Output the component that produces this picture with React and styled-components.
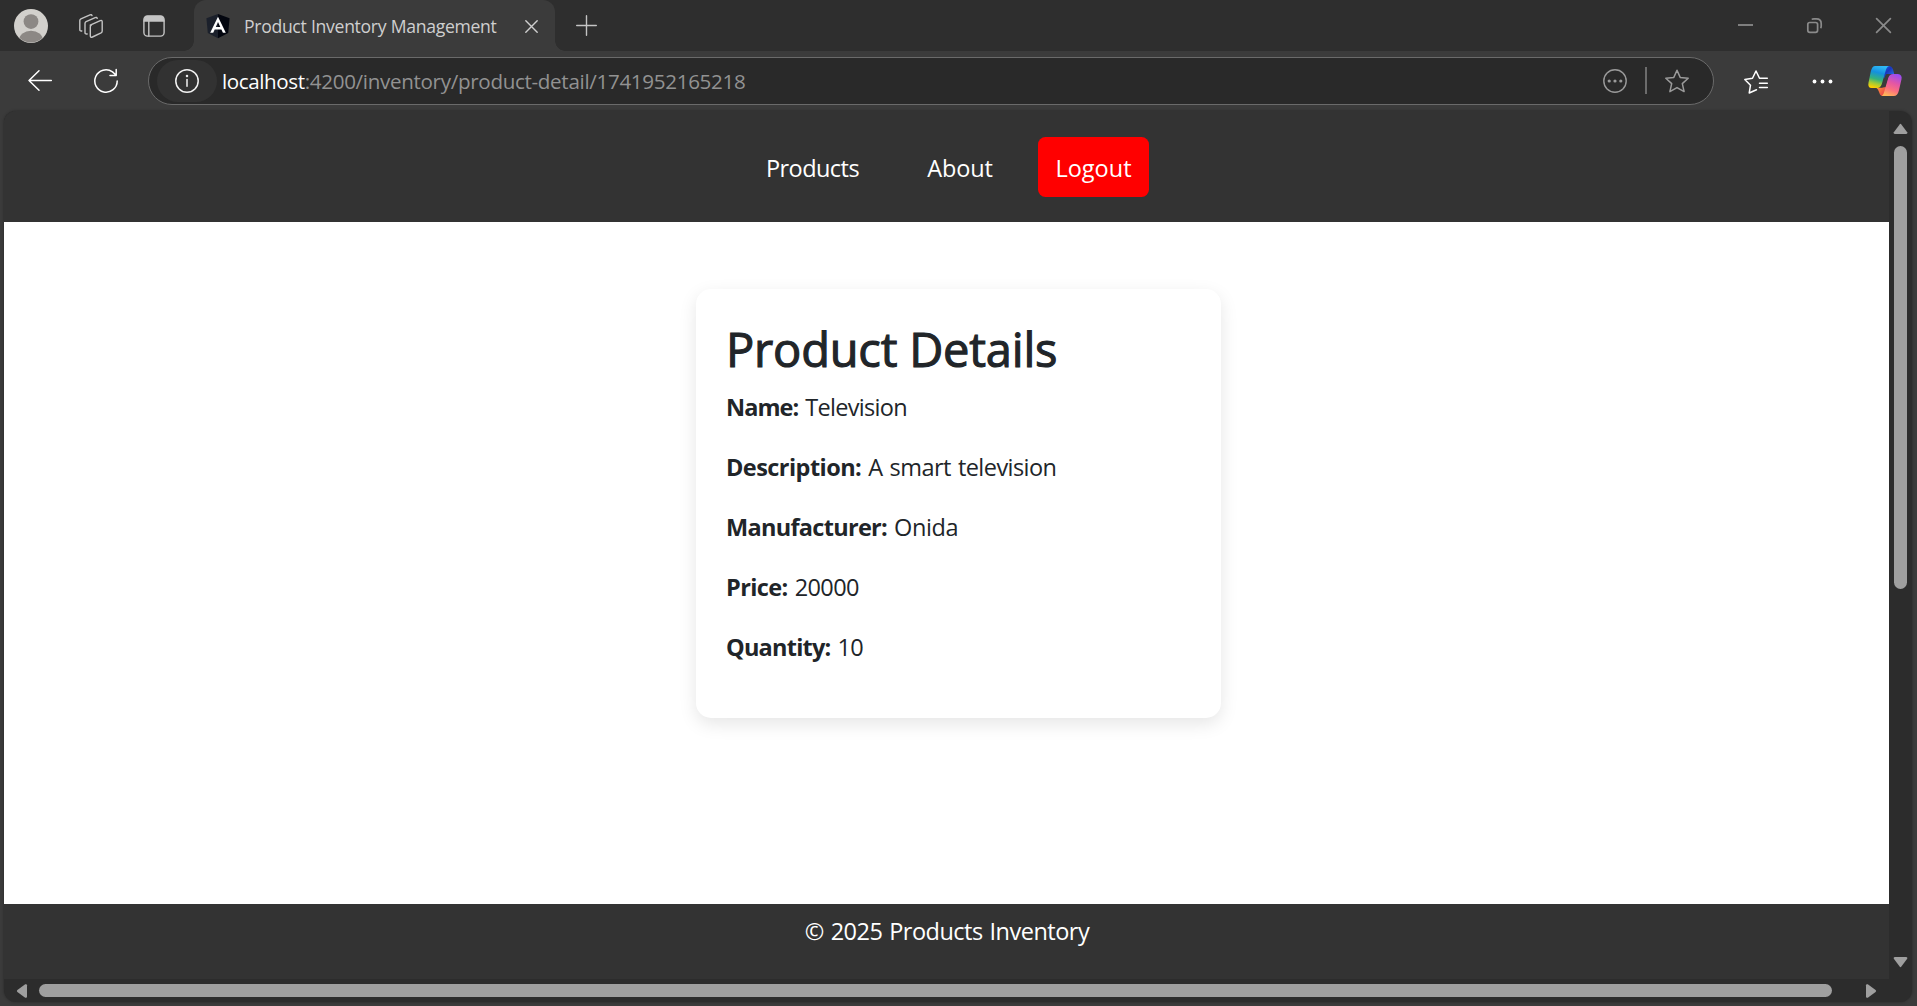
import React from "react";
import styled, { createGlobalStyle } from "styled-components";

const GlobalStyle = createGlobalStyle`
  *, *::before, *::after { box-sizing: border-box; }
  html, body { margin: 0; height: 100%; overflow: hidden; }
  #root { height: 100%; }
  body { font-family: "Open Sans", "Noto Sans", sans-serif; background: #3b3b3b; }
`;

const Window = styled.div`
  display: flex;
  flex-direction: column;
  width: 1917px;
  height: 1006px;
  background: #3b3b3b;
`;

/* ---------- Title bar ---------- */
const TabStrip = styled.header`
  display: flex;
  align-items: center;
  height: 51px;
  padding-left: 14px;
  background: #2e2e2e;
`;

const Glyph = styled.svg`
  display: block;
  flex: none;
  width: ${(p) => p.$w}px;
  height: ${(p) => p.$h || p.$w}px;
  margin-left: ${(p) => p.$ml || 0}px;
  margin-top: ${(p) => p.$mt || 0}px;
  overflow: visible;
`;

const Tab = styled.div`
  position: relative;
  display: flex;
  align-items: center;
  width: 361px;
  height: 51px;
  margin-left: 29px;
  padding-left: 12px;
  border-radius: 12px 12px 0 0;
  background: #3b3b3b;

  &::before,
  &::after {
    content: "";
    position: absolute;
    bottom: 0;
    width: 10px;
    height: 10px;
  }
  &::before {
    left: -10px;
    background: radial-gradient(circle at 0 0, #2e2e2e 9.5px, #3b3b3b 10px);
  }
  &::after {
    right: -10px;
    background: radial-gradient(circle at 100% 0, #2e2e2e 9.5px, #3b3b3b 10px);
  }
`;

const TabTitle = styled.span`
  width: 280px;
  margin-left: 14px;
  font-size: 17.6px;
  line-height: 24px;
  letter-spacing: -0.31px;
  word-spacing: 0.3px;
  white-space: nowrap;
  color: #cfcfcf;
`;

const WindowControls = styled.div`
  display: flex;
  align-items: center;
  gap: 54px;
  margin-left: auto;
  padding-right: 26px;
`;

/* ---------- Toolbar ---------- */
const Toolbar = styled.div`
  display: flex;
  align-items: center;
  height: 60px;
  padding: 0 0 1px 28px;
  background: #3b3b3b;
`;

const AddressBar = styled.div`
  display: flex;
  align-items: center;
  width: 1566px;
  height: 48px;
  margin-left: 30px;
  padding: 0 24px 0 8px;
  border: 1.5px solid #6a6a6a;
  border-radius: 24px;
  background: #292929;
`;

const SiteInfo = styled.div`
  display: flex;
  align-items: center;
  width: 60px;
  height: 42px;
  padding-left: 18px;
  border-radius: 21px;
  background: #323232;
`;

const Url = styled.span`
  flex: 1;
  margin-left: 5px;
  font-size: 20.6px;
  line-height: 30px;
  letter-spacing: -0.32px;
  white-space: nowrap;
  color: #929292;
`;

const Host = styled.span`
  letter-spacing: -0.4px;
  color: #fff;
`;

const BarDivider = styled.span`
  width: 2px;
  height: 27px;
  margin: 0 18px;
  background: #6c6c6c;
`;

/* ---------- Page viewport ---------- */
const Viewport = styled.div`
  display: grid;
  grid-template-columns: 1885px 23px;
  grid-template-rows: 868px 23px;
  width: 1908px;
  height: 891px;
  margin-left: 4px;
  border-radius: 12px;
  overflow: hidden;
  background: #2c2c2c;
  box-shadow: 0 0 3px rgba(0, 0, 0, 0.35);
`;

const Page = styled.div`
  display: flex;
  flex-direction: column;
  overflow: hidden;
  background: #333;
`;

const Nav = styled.nav`
  display: flex;
  justify-content: center;
  height: 111px;
  padding: 26px 0 0 4px;
  background: #333;
`;

const NavLink = styled.a`
  width: ${(p) => p.$width}px;
  height: 60px;
  margin-left: ${(p) => p.$gap || 0}px;
  padding: 13px 0 11px;
  border-radius: 7.5px;
  background: ${(p) => (p.$danger ? "#ff0000" : "transparent")};
  color: #fff;
  font-size: 23.5px;
  line-height: 36px;
  letter-spacing: ${(p) => p.$track}px;
  text-align: center;
  white-space: nowrap;
`;

const Main = styled.main`
  flex: 1;
  width: 1909px;
  padding-top: 67px;
  background: #fff;
`;

const Card = styled.section`
  width: 525px;
  height: 429px;
  margin: 0 auto;
  padding: 31px 29px 29px 30px;
  border-radius: 15px;
  background: #fff;
  box-shadow: 0 6px 18px rgba(0, 0, 0, 0.1);
  color: #212529;
`;

const CardTitle = styled.h1`
  margin: 0 0 11px;
  font-size: 47px;
  font-weight: 400;
  line-height: 58px;
  letter-spacing: -0.2px;
  -webkit-text-stroke: 1.1px #212529;
  white-space: nowrap;
`;

const Detail = styled.p`
  display: flex;
  gap: 7px;
  margin: 0 0 24px;
  font-size: 23.5px;
  line-height: 36px;
  white-space: nowrap;
`;

const Label = styled.strong`
  font-weight: 700;
  letter-spacing: ${(p) => p.$track}px;
`;

const Value = styled.span`
  letter-spacing: ${(p) => p.$track}px;
  word-spacing: 1.5px;
`;

const Footer = styled.footer`
  height: 75px;
  padding: 9px 0 0 1px;
  background: #333;
  color: #fff;
  font-size: 23.5px;
  line-height: 36px;
  letter-spacing: -0.5px;
  word-spacing: 1.2px;
  text-align: center;
`;

/* ---------- Scrollbars ---------- */
const VerticalBar = styled.div`
  display: flex;
  flex-direction: column;
  align-items: center;
  padding: 12px 0 11px 0;
`;

const HorizontalBar = styled.div`
  display: flex;
  align-items: center;
  padding: 0 12px 0 12px;
`;

const VerticalThumb = styled.div`
  width: 13px;
  height: 443px;
  margin: 12px 0 auto;
  border-radius: 7px;
  background: #9f9f9f;
`;

const HorizontalThumb = styled.div`
  width: 1793px;
  height: 13px;
  margin: 0 auto 0 12px;
  border-radius: 7px;
  background: #9f9f9f;
`;

const stroke = (color, width) => ({
  fill: "none",
  stroke: color,
  strokeWidth: width,
  strokeLinecap: "round",
  strokeLinejoin: "round",
});

const Avatar = () => (
  <Glyph $w={34} $mt={1} viewBox="0 0 34 34">
    <defs>
      <clipPath id="avatarClip"><circle cx="17" cy="17" r="16.5" /></clipPath>
    </defs>
    <circle cx="17" cy="17" r="17" fill="#d2d0cc" />
    <g clipPath="url(#avatarClip)" fill="#8c8885">
      <circle cx="17" cy="12.6" r="7.4" />
      <ellipse cx="17" cy="31.5" rx="12" ry="9.8" />
    </g>
  </Glyph>
);

const Workspaces = () => (
  <Glyph $w={24} $ml={31} $mt={1} viewBox="0 0 24 24" {...stroke("#c4c4c4", 1.4)}>
    <path d="M11.2 11.2 L21.3 6.6 Q23.2 5.9 23.2 7.8 V17 Q23.2 18.2 22.1 18.8 L13.4 23 Q11.3 23.9 11.3 21.8 V12.8 Q11.3 11.5 12.4 11" />
    <path d="M8.2 20 Q6 20.4 6 18.4 V9.4 Q6 8.2 7.1 7.7 L16.2 3.6 Q17.8 3 18.2 4.4" />
    <path d="M2.8 17 Q.8 17.4 .8 15.4 V6.6 Q.8 5.4 1.9 4.9 L11 .9 Q12.6 .3 13 1.6" />
  </Glyph>
);

const TabActions = () => (
  <Glyph $w={22} $ml={40} $mt={1} viewBox="0 0 22 22">
    <path d="M1 6 V4.5 Q1 .8 4.7 .8 H17.3 Q21 .8 21 4.5 V6 Z" fill="#c4c4c4" />
    <g {...stroke("#c4c4c4", 1.4)}>
      <rect x=".9" y=".9" width="20.2" height="20.2" rx="3.6" />
      <path d="M1 6H21M5.8 6V21" />
    </g>
  </Glyph>
);

const AngularLogo = () => (
  <Glyph $w={24} $mt={1} viewBox="0 0 24 24">
    <path d="M12 0 L.4 4.2 L1.8 19 L12 24.2 Z" fill="#1b202b" />
    <path d="M12 0 L23.6 4.2 L22.2 19 L12 24.2 Z" fill="#03060f" />
    <path fillRule="evenodd" fill="#fff" d="M12 2.8 L4.2 18.7 H7.2 L8.7 15.5 H15.4 L16.9 18.7 H19.8 Z M12 8 L14.3 13 H9.8 Z" />
  </Glyph>
);

const Copilot = () => (
  <Glyph $w={34} $h={30} $ml={35} $mt={1} viewBox="25 30 101 90">
    <defs>
      <linearGradient id="cpLeft" x1="0.55" y1="0" x2="0.3" y2="1">
        <stop offset="0" stopColor="#2fb8f5" />
        <stop offset=".3" stopColor="#1490df" />
        <stop offset=".6" stopColor="#35b27c" />
        <stop offset=".8" stopColor="#a5cb35" />
        <stop offset="1" stopColor="#ffd000" />
      </linearGradient>
      <linearGradient id="cpTop" x1="0" y1="0" x2="1" y2="1">
        <stop offset="0" stopColor="#1670dc" />
        <stop offset=".45" stopColor="#1c36bd" />
        <stop offset="1" stopColor="#2585ea" />
      </linearGradient>
      <linearGradient id="cpRight" x1="0.7" y1="0" x2="0.35" y2="1">
        <stop offset="0" stopColor="#9a4cf2" />
        <stop offset=".4" stopColor="#e356a5" />
        <stop offset=".7" stopColor="#fb6f80" />
        <stop offset="1" stopColor="#ffb457" />
      </linearGradient>
      <linearGradient id="cpBottom" x1="0" y1="0" x2="1" y2=".7">
        <stop offset="0" stopColor="#ff9c39" />
        <stop offset="1" stopColor="#ea394b" />
      </linearGradient>
    </defs>
    <path fill="url(#cpTop)" d="M70 30 H89 Q97 31 99.5 40 L103 54 H92 Q79 54 76 66 L66 62 Z" />
    <path fill="url(#cpBottom)" d="M49 95 H66 L75 92 L82 96 L80 108 Q77 120 70 120 Q61 120 58.5 110 Q55 98 49 95 Z" />
    <path fill="url(#cpLeft)" d="M46 30 H88 Q80 32 77 46 L66 84 Q62 96 52 96 H35 Q23 95 26 80 L33 46 Q37 30 46 30 Z" />
    <path fill="url(#cpRight)" d="M100 54 H114 Q128 56 125 70 L117 104 Q113 120 102 120 H66 Q71 117 74 104 L85 66 Q89 54 100 54 Z" />
    <path fill="#3b3b3b" d="M78 55 Q82 53 90 54.5 Q86 57 84 66 L75 94 H62 Q66 90 68 83 Z" />
  </Glyph>
);

const STAR = "M12 1.2 L15.2 8.4 L23.2 9.2 L17.3 14.6 L19.1 22.6 L12 18.6 L4.9 22.6 L6.7 14.6 L.8 9.2 L8.8 8.4 Z";

const ARROWS = {
  up: "M6.6 1.4 Q7.5 .2 8.4 1.4 L14.2 9.2 Q14.8 11 13.2 11 H1.8 Q.2 11 .8 9.2 Z",
  down: "M6.6 9.6 Q7.5 10.8 8.4 9.6 L14.2 1.8 Q14.8 0 13.2 0 H1.8 Q.2 0 .8 1.8 Z",
  left: "M1.4 6.1 Q.2 7 1.4 7.9 L9.2 13.7 Q11 14.3 11 12.7 V1.3 Q11 -.3 9.2 .3 Z",
  right: "M9.6 6.1 Q10.8 7 9.6 7.9 L1.8 13.7 Q0 14.3 0 12.7 V1.3 Q0 -.3 1.8 .3 Z",
};

const ScrollArrow = ({ dir }) => {
  const vertical = dir === "up" || dir === "down";
  const w = vertical ? 15 : 11;
  const h = vertical ? 11 : 14;
  return (
    <Glyph $w={w} $h={h} viewBox={`0 0 ${w} ${h}`} fill="#9f9f9f">
      <path d={ARROWS[dir]} />
    </Glyph>
  );
};

const DETAILS = [
  { label: "Name:", value: "Television", lt: -0.93, vt: -0.71 },
  { label: "Description:", value: "A smart television", lt: -0.55, vt: -0.55 },
  { label: "Manufacturer:", value: "Onida", lt: -0.7, vt: -0.4 },
  { label: "Price:", value: "20000", lt: -0.6, vt: -0.6 },
  { label: "Quantity:", value: "10", lt: -0.77, vt: -0.8 },
];

export default function App() {
  return (
    <>
      <GlobalStyle />
      <Window>
        <TabStrip>
          <Avatar />
          <Workspaces />
          <TabActions />
          <Tab>
            <AngularLogo />
            <TabTitle>Product Inventory Management</TabTitle>
            <Glyph $w={13} $ml={1} $mt={1} viewBox="0 0 13 13" {...stroke("#cfcfcf", 1.4)}>
              <path d="M.8 .8 12.2 12.2M12.2 .8 .8 12.2" />
            </Glyph>
          </Tab>
          <Glyph $w={21} $ml={21} $mt={-1} viewBox="0 0 21 21" {...stroke("#c4c4c4", 1.4)}>
            <path d="M10.5 .7V20.3M.7 10.5H20.3" />
          </Glyph>
          <WindowControls>
            <Glyph $w={15} viewBox="0 0 15 15" fill="none" stroke="#8a8a8a" strokeWidth="1.8">
              <path d="M0 7H15" />
            </Glyph>
            <Glyph $w={15} viewBox="0 0 15 15" fill="none" stroke="#8a8a8a" strokeWidth="1.7">
              <rect x=".8" y="4.5" width="9.8" height="9.8" rx="2" />
              <path d="M4.8 1.5 Q5.5 .8 7 .8 H9.5 Q14.2 .8 14.2 5.5 V8 Q14.2 9.5 13.5 10.2" />
            </Glyph>
            <Glyph $w={15} viewBox="0 0 15 15" {...stroke("#8a8a8a", 1.7)}>
              <path d="M.6 .6 14.4 14.4M14.4 .6 .6 14.4" />
            </Glyph>
          </WindowControls>
        </TabStrip>

        <Toolbar>
          <Glyph $w={24} $h={21} viewBox="0 0 24 21" {...stroke("#fff", 1.5)}>
            <path d="M23.3 10.5H1M11 .7 1 10.5 11 20.3" />
          </Glyph>
          <Glyph $w={24} $ml={42} $mt={1} viewBox="0 0 24 24" {...stroke("#fff", 1.5)}>
            <path d="M23.2 12 A11.2 11.2 0 1 1 18.5 2.9 L22.2 6.3 M22.2 .6 V6.5 H16" />
          </Glyph>
          <AddressBar>
            <SiteInfo>
              <Glyph $w={24} viewBox="0 0 24 24" {...stroke("#f2f2f2", 1.5)}>
                <circle cx="12" cy="12" r="11.2" />
                <path d="M12 10.5V17.2" />
                <circle cx="12" cy="7" r=".5" fill="#f2f2f2" />
              </Glyph>
            </SiteInfo>
            <Url>
              <Host>localhost</Host>:4200/inventory/product-detail/1741952165218
            </Url>
            <Glyph $w={24} viewBox="0 0 24 24" fill="#9a9a9a">
              <circle cx="12" cy="12" r="11.2" fill="none" stroke="#9a9a9a" strokeWidth="1.4" />
              <circle cx="6.2" cy="12" r="1.6" />
              <circle cx="12" cy="12" r="1.6" />
              <circle cx="17.8" cy="12" r="1.6" />
            </Glyph>
            <BarDivider />
            <Glyph $w={24} viewBox="0 0 24 24" {...stroke("#9a9a9a", 1.5)}>
              <path d={STAR} />
            </Glyph>
          </AddressBar>
          <Glyph $w={24} $ml={30} $mt={2} viewBox="0 0 24 24" {...stroke("#fff", 1.5)}>
            <path d="M12.5 19.8 L5.2 23 L6.5 15.2 L.8 9.5 L8.5 8.3 L12 1 L15.5 8.3 H23.3" />
            <path d="M15.5 13.3H23.3M15.5 17.6H23.3" />
          </Glyph>
          <Glyph $w={21} $h={5} $ml={44} $mt={2} viewBox="0 0 21 5" fill="#fff">
            <circle cx="2.5" cy="2.5" r="1.9" />
            <circle cx="10.5" cy="2.5" r="1.9" />
            <circle cx="18.5" cy="2.5" r="1.9" />
          </Glyph>
          <Copilot />
        </Toolbar>

        <Viewport>
          <Page>
            <Nav>
              <NavLink $width={129} $track={-0.55}>Products</NavLink>
              <NavLink $width={100} $gap={33} $track={-0.15}>About</NavLink>
              <NavLink $width={111} $gap={28} $track={0} $danger>Logout</NavLink>
            </Nav>
            <Main>
              <Card>
                <CardTitle>Product Details</CardTitle>
                {DETAILS.map((d) => (
                  <Detail key={d.label}>
                    <Label $track={d.lt}>{d.label}</Label>
                    <Value $track={d.vt}>{d.value}</Value>
                  </Detail>
                ))}
              </Card>
            </Main>
            <Footer>© 2025 Products Inventory</Footer>
          </Page>
          <VerticalBar>
            <ScrollArrow dir="up" />
            <VerticalThumb />
            <ScrollArrow dir="down" />
          </VerticalBar>
          <HorizontalBar>
            <ScrollArrow dir="left" />
            <HorizontalThumb />
            <ScrollArrow dir="right" />
          </HorizontalBar>
        </Viewport>
      </Window>
    </>
  );
}
